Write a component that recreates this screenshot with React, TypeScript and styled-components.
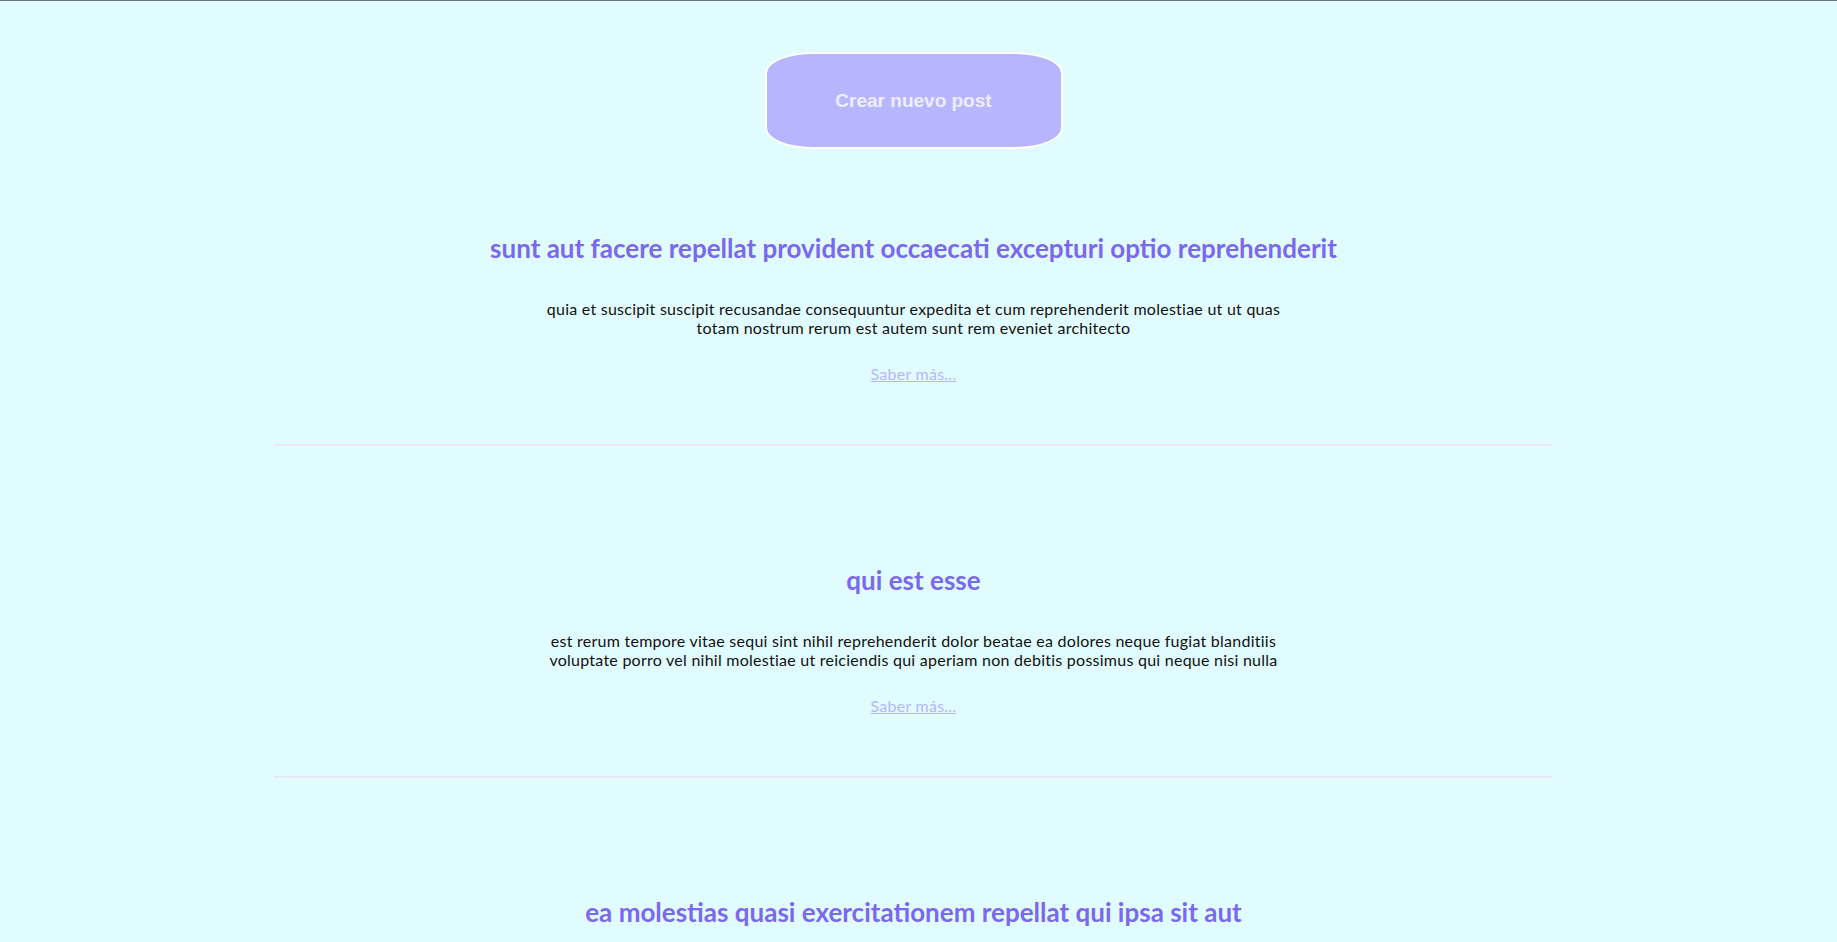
import React from "react";
import styled, { createGlobalStyle } from "styled-components";

const GlobalStyle = createGlobalStyle`
  html, body {
    margin: 0;
    padding: 0;
  }
  body {
    background: #e1fcff;
    border-top: 1px solid #6b7680;
    font-family: Lato, "Noto Sans", sans-serif;
    color: #111;
  }
`;

type Post = { id: number; title: string; body: string };

const posts: Post[] = [
  {
    id: 1,
    title: "sunt aut facere repellat provident occaecati excepturi optio reprehenderit",
    body: "quia et suscipit suscipit recusandae consequuntur expedita et cum reprehenderit molestiae ut ut quas totam nostrum rerum est autem sunt rem eveniet architecto",
  },
  {
    id: 2,
    title: "qui est esse",
    body: "est rerum tempore vitae sequi sint nihil reprehenderit dolor beatae ea dolores neque fugiat blanditiis voluptate porro vel nihil molestiae ut reiciendis qui aperiam non debitis possimus qui neque nisi nulla",
  },
  {
    id: 3,
    title: "ea molestias quasi exercitationem repellat qui ipsa sit aut",
    body: "et iusto sed quo iure voluptatem occaecati omnis eligendi aut ad voluptatem doloribus vel accusantium quis pariatur molestiae porro eius odio et labore et velit aut",
  },
  {
    id: 4,
    title: "eum et est occaecati",
    body: "ullam et saepe reiciendis voluptatem adipisci sit amet autem assumenda provident rerum culpa quis hic commodi nesciunt rem tenetur doloremque ipsam iure quis sunt voluptatem rerum illo velit",
  },
  {
    id: 5,
    title: "nesciunt quas odio",
    body: "repudiandae veniam quaerat sunt sed alias aut fugiat sit autem sed est voluptatem omnis possimus esse voluptatibus quis est aut tenetur dolor neque",
  },
];

const Page = styled.main`
  display: flex;
  flex-direction: column;
  align-items: center;
  padding: 51px 10px 80px 0;
`;

const CreateButton = styled.button`
  box-sizing: border-box;
  width: 298px;
  height: 97px;
  border: 2px solid #ffffff;
  border-radius: 48px / 21px;
  background: #b8b5ff;
  color: #eeeeff;
  font-family: "Liberation Sans", Arial, sans-serif;
  font-weight: 700;
  font-size: 19px;
  cursor: pointer;
`;

const Feed = styled.section`
  width: 70%;
  margin-top: 84px;
  display: flex;
  flex-direction: column;
  gap: 119px;
`;

const Article = styled.article`
  display: flex;
  flex-direction: column;
  align-items: center;
  text-align: center;
  padding-bottom: 61px;
  border-bottom: 2px solid #ebe7fb;
`;

const Title = styled.h2`
  margin: 0;
  font-size: 26px;
  line-height: 30px;
  font-weight: 700;
  color: #7b68ee;
`;

const Body = styled.p`
  margin: 36px 0 0;
  max-width: 752px;
  font-size: 16px;
  line-height: 19px;
  letter-spacing: 0.25px;
  color: #111;
`;

const MoreLink = styled.a`
  margin-top: 27px;
  font-size: 16px;
  line-height: 19px;
  letter-spacing: 0.25px;
  color: #b8b5ff;
  text-decoration: underline;
`;

export default function App() {
  return (
    <>
      <GlobalStyle />
      <Page>
        <CreateButton type="button">Crear nuevo post</CreateButton>
        <Feed>
          {posts.map((p) => (
            <Article key={p.id}>
              <Title>{p.title}</Title>
              <Body>{p.body}</Body>
              <MoreLink href="#">Saber más...</MoreLink>
            </Article>
          ))}
        </Feed>
      </Page>
    </>
  );
}
